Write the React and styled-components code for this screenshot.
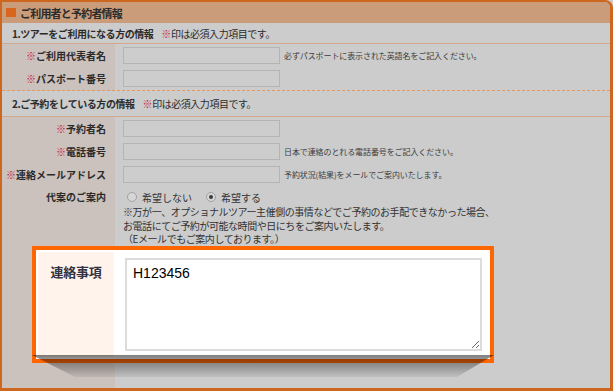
import styled, { createGlobalStyle } from "styled-components";

const GlobalStyle = createGlobalStyle`
  html, body {
    margin: 0;
    padding: 0;
    background: #cccccc;
  }
  body {
    font-family: "Noto Sans CJK JP", "Noto Sans", sans-serif;
    color: #2b2b2b;
  }
`;

const Frame = styled.div`
  width: 613px;
  height: 391px;
  box-sizing: border-box;
  border: solid #cd661f;
  border-width: 2px 3px 3px 2px;
  border-top-right-radius: 8px;
  overflow: hidden;
  display: flex;
  flex-direction: column;
  background: linear-gradient(to right, #ccc2bd 113px, #cccccc 113px);
`;

const Header = styled.div`
  height: 21px;
  flex: none;
  display: flex;
  align-items: center;
  gap: 4px;
  padding-left: 4px;
  background: #ca9c7a;
  font-size: 11px;
  font-weight: bold;
  letter-spacing: -0.8px;
`;

const HeaderMark = styled.span`
  width: 10px;
  height: 9px;
  background: #d8661d;
`;

const Section = styled.div`
  height: ${(p) => p.$h}px;
  flex: none;
  display: flex;
  align-items: center;
  padding-left: 10px;
  background: #cccccc;
  border-bottom: 1px solid #d1aa8e;
  font-size: 10px;
  letter-spacing: -0.45px;
`;

const SectionTitle = styled.b`
  margin-right: 8px;
`;

const Mark = styled.span`
  color: #c4143f;
`;

const Row = styled.div`
  display: grid;
  grid-template-columns: 113px 1fr;
  align-items: ${(p) => (p.$top ? "start" : "center")};
  height: ${(p) => p.$h || 23}px;
  flex: none;
  box-sizing: border-box;
  border-bottom: ${(p) => (p.$dashed ? "1px dashed #e29a62" : "none")};
`;

const Label = styled.div`
  text-align: right;
  padding-right: 9px;
  font-size: 10px;
  font-weight: bold;
  line-height: 14px;
  padding-top: ${(p) => (p.$top ? 4 : 0)}px;
`;

const Value = styled.div`
  display: flex;
  align-items: center;
  gap: 4px;
  padding-left: 8px;
`;

const TextInput = styled.div`
  width: 157px;
  height: 17px;
  box-sizing: border-box;
  border: 1px solid #b4b4b4;
  background: #cdcdcd;
  flex: none;
`;

const Help = styled.span`
  font-size: 8px;
  letter-spacing: -0.1px;
  color: #3c3c3c;
  white-space: nowrap;
`;

const Choice = styled.div`
  padding-left: 8px;
  padding-top: 4px;
  font-size: 10px;
  color: #333;
`;

const RadioLine = styled.div`
  display: flex;
  align-items: center;
  height: 14px;
  padding-left: 4px;
`;

const RadioOption = styled.span`
  display: inline-flex;
  align-items: center;
  gap: 5px;
  margin-right: 14px;
`;

const RadioDot = styled.span`
  width: 8px;
  height: 8px;
  border-radius: 50%;
  border: 1px solid #a2a2a2;
  background: #d6d6d6;
  display: inline-flex;
  align-items: center;
  justify-content: center;

  &::after {
    content: "";
    width: 4px;
    height: 4px;
    border-radius: 50%;
    background: ${(p) => (p.$checked ? "#3a3a3a" : "transparent")};
  }
`;

const Note = styled.div`
  margin-top: 1px;
  line-height: 13.5px;
  letter-spacing: -0.45px;
  white-space: nowrap;
`;

const Focus = styled.div`
  position: relative;
  z-index: 1;
  flex: none;
  margin-left: 30px;
  width: 462px;
  height: 117px;
  box-sizing: border-box;
  border: 4px solid #ff6600;
  padding: 2px;
  background: #ffffff;
  display: grid;
  grid-template-columns: 76px 1fr;

  &::after {
    content: "";
    position: absolute;
    left: -4px;
    top: calc(100% - 4px);
    width: 462px;
    height: 22px;
    background: linear-gradient(to bottom, rgba(0, 0, 0, 0.5), rgba(0, 0, 0, 0.06));
    clip-path: polygon(0 0, 100% 0, 92% 100%, 9.3% 100%);
  }
`;

const FocusLabel = styled.div`
  background: #fff3ec;
  padding-top: 10px;
  text-align: center;
  font-size: 13px;
  font-weight: bold;
  color: #333344;
  letter-spacing: -0.3px;
`;

const FocusValue = styled.div`
  padding: 6px 6px 6px 11px;
`;

const Memo = styled.textarea`
  display: block;
  width: 100%;
  height: 93px;
  box-sizing: border-box;
  margin: 0;
  border: 2px solid #dcdcdc;
  padding: 5px 6px;
  font-family: "Liberation Sans", Arial, sans-serif;
  font-size: 14px;
  color: #000;
  outline: none;
  resize: vertical;
`;

const fields = [
  { label: "ご利用代表者名", help: "必ずパスポートに表示された英語名をご記入ください。" },
  { label: "パスポート番号", dashed: true },
];

const contacts = [
  { label: "予約者名" },
  { label: "電話番号", help: "日本で連絡のとれる電話番号をご記入ください。" },
  { label: "連絡メールアドレス", help: "予約状況(結果)をメールでご案内いたします。" },
];

function Field({ label, help, dashed }) {
  return (
    <Row $dashed={dashed} $h={dashed ? 24 : 23}>
      <Label>
        <Mark>※</Mark>
        {label}
      </Label>
      <Value>
        <TextInput />
        {help && <Help>{help}</Help>}
      </Value>
    </Row>
  );
}

export default function App() {
  return (
    <>
      <GlobalStyle />
      <Frame>
        <Header>
          <HeaderMark />
          ご利用者と予約者情報
        </Header>

        <Section $h={20}>
          <SectionTitle>1.ツアーをご利用になる方の情報</SectionTitle>
          <Mark>※</Mark>印は必須入力項目です。
        </Section>
        {fields.map((f) => (
          <Field key={f.label} {...f} />
        ))}

        <Section $h={25}>
          <SectionTitle>2.ご予約をしている方の情報</SectionTitle>
          <Mark>※</Mark>印は必須入力項目です。
        </Section>
        {contacts.map((f) => (
          <Field key={f.label} {...f} />
        ))}

        <Row $top $h={60}>
          <Label $top>代案のご案内</Label>
          <Choice>
            <RadioLine>
              <RadioOption>
                <RadioDot />
                希望しない
              </RadioOption>
              <RadioOption>
                <RadioDot $checked />
                希望する
              </RadioOption>
            </RadioLine>
            <Note>
              ※万が一、オプショナルツアー主催側の事情などでご予約のお手配できなかった場合、
              <br />
              お電話にてご予約が可能な時間や日にちをご案内いたします。
              <br />
              （Eメールでもご案内しております。）
            </Note>
          </Choice>
        </Row>

        <Focus>
          <FocusLabel>連絡事項</FocusLabel>
          <FocusValue>
            <Memo defaultValue="H123456" />
          </FocusValue>
        </Focus>
      </Frame>
    </>
  );
}
